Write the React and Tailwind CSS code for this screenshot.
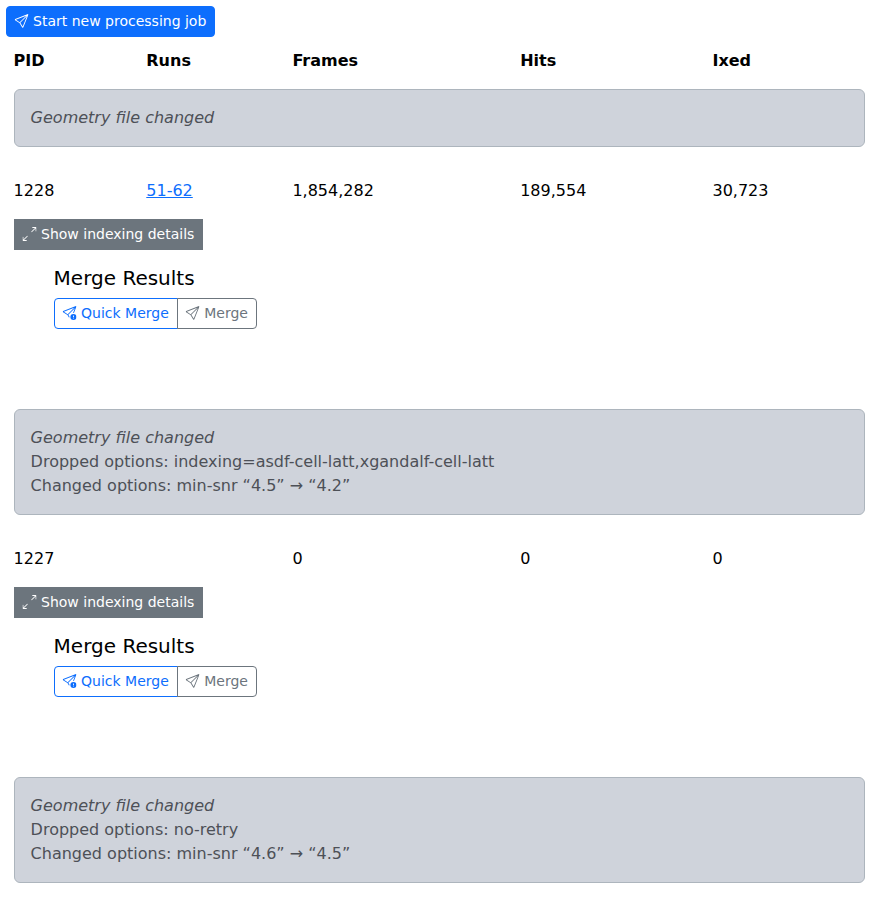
import { BsSend, BsSendExclamation, BsArrowsAngleExpand } from "react-icons/bs";

function Notice({ children }) {
  return (
    <div className="ml-2 rounded-[6px] border border-[#adb5bd] bg-[#cfd3db] p-4 text-[#4d5057]">
      <div className="italic">Geometry file changed</div>
      {children}
    </div>
  );
}

const cols = "grid grid-cols-[132.7px_146.1px_227.8px_192.3px_1fr] pl-2";
const button = "block whitespace-nowrap border px-2 py-1 text-sm leading-[21px]";
const icon = "inline-block align-[-0.125em] -translate-x-[0.5px] translate-y-px";

function Job({ pid, runs, frames, hits, indexed }) {
  return (
    <section>
      <div className={`${cols} pt-8`}>
        <div>{pid}</div>
        <div>{runs && <a className="text-[#0d6efd] underline">{runs}</a>}</div>
        <div>{frames}</div>
        <div>{hits}</div>
        <div>{indexed}</div>
      </div>
      <div className="ml-2 mt-4">
        <button className={`${button} border-[#6c757d] bg-[#6c757d] text-white`}>
          <BsArrowsAngleExpand className={icon} /> Show indexing details
        </button>
      </div>
      <div className="ml-12 mt-4">
        <h5 className="text-xl leading-6">Merge Results</h5>
        <div className="mt-2 flex">
          <button className={`${button} rounded-l border-[#0d6efd] text-[#0d6efd]`}>
            <BsSendExclamation className={icon} /> Quick Merge
          </button>
          <button className={`${button} -ml-px rounded-r border-[#6c757d] text-[#6c757d]`}>
            <BsSend className={icon} /> Merge
          </button>
        </div>
      </div>
    </section>
  );
}

export default function App() {
  return (
    <main className="h-[899px] w-[869px] overflow-hidden bg-white pl-[5.6px] pr-[4.4px] pt-[5.6px] font-['DejaVu_Sans',sans-serif] text-base text-black">
      <button className={`${button} rounded border-[#0d6efd] bg-[#0d6efd] text-white`}>
        <BsSend className={icon} /> Start new processing job
      </button>
      <div className={`${cols} mb-4 pt-3 font-bold`}>
        <div>PID</div>
        <div>Runs</div>
        <div>Frames</div>
        <div>Hits</div>
        <div>Ixed</div>
      </div>
      <Notice />
      <Job pid="1228" runs="51-62" frames="1,854,282" hits="189,554" indexed="30,723" />
      <div className="mt-20">
        <Notice>
          <div>Dropped options: indexing=asdf-cell-latt,xgandalf-cell-latt</div>
          <div>Changed options: min-snr “4.5” → “4.2”</div>
        </Notice>
      </div>
      <Job pid="1227" frames="0" hits="0" indexed="0" />
      <div className="mt-20">
        <Notice>
          <div>Dropped options: no-retry</div>
          <div>Changed options: min-snr “4.6” → “4.5”</div>
        </Notice>
      </div>
    </main>
  );
}
